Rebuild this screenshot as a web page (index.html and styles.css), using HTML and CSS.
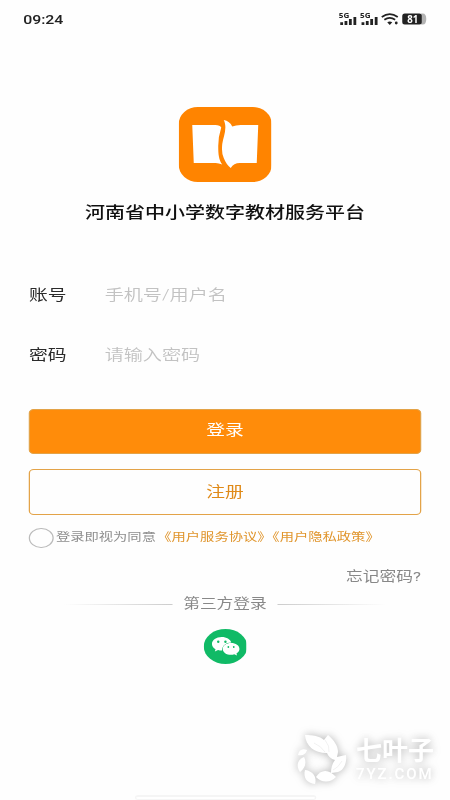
FILE: index.html
```html
<!DOCTYPE html>
<html lang="zh-CN">
<head>
<meta charset="utf-8">
<title>登录</title>
<link rel="stylesheet" href="styles.css">
</head>
<body>
<main class="screen">
  <header class="status">
    <span class="time">09:24</span>
    <svg class="indicators" width="72" height="20" viewBox="0 0 90 20" preserveAspectRatio="none">
      <g fill="#222">
        <g>
          <path d="M1.500 12.200h2.800v2.800H1.500zM5.800 11h2.800v4H5.800zM10.200 9H13v6h-2.800zM14.700 7h2.800v8h-2.800z"/>
          <text x="0" y="7.800" class="net" textLength="10.500" lengthAdjust="spacingAndGlyphs">5G</text>
        </g>
        <g transform="translate(21.300)">
          <path d="M1.500 12.200h2.800v2.800H1.500zM5.800 11h2.800v4H5.800zM10.200 9H13v6h-2.800zM14.700 7h2.800v8h-2.800z"/>
          <text x="0" y="7.800" class="net" textLength="10.500" lengthAdjust="spacingAndGlyphs">5G</text>
        </g>
        <path d="M48.500 12.200 51 15l2.500-2.800q-2.500-1.500-5 0z"/>
        <circle cx="57.500" cy="13" r="1.400"/>
      </g>
      <path d="M43 7q8-5.800 16 0M45.600 9.800q5.400-3.900 10.800 0" fill="none" stroke="#222" stroke-width="1.700"/>
      <path d="M82 3.500h2q3.500 0 3.500 5.500t-3.500 5.500h-2z" fill="#b3b3b3"/>
      <rect x="63.500" y="3.500" width="19.500" height="11" rx="2.500" fill="#222"/>
      <text x="68.500" y="12.500" class="level" textLength="11" lengthAdjust="spacingAndGlyphs">81</text>
    </svg>
  </header>

  <section class="brand">
    <svg class="logo" width="74.400" height="75" viewBox="0 0 93 75" preserveAspectRatio="none">
      <rect width="93" height="75" rx="19" ry="17" fill="#ff8400"/>
      <path d="M13.500 18h23q5 0 6 2.500-3 9-3 18.500c0 8 .5 14 4 18.500Q40 56 37 56H15z" fill="#fff"/>
      <path d="M45 13q6 1 8.500 6.500Q57 18 62 18h17.500L78 56H61q-6 0-9 5-4.500-3.500-7-10-2.500-5-1.500-14c1-7 5.500-16 1.500-24z" fill="#fff"/>
    </svg>
    <h1>河南省中小学数字教材服务平台</h1>
  </section>

  <form class="form">
    <div class="field"><span class="label">账号</span><span class="hint">手机号/用户名</span></div>
    <div class="field"><span class="label">密码</span><span class="hint">请输入密码</span></div>
    <button type="button" class="btn primary">登录</button>
    <button type="button" class="btn outline">注册</button>
    <div class="agree"><i class="radio"></i><span>登录即视为同意</span><span class="policy first">《用户服务协议》</span><span class="policy last">《用户隐私政策》</span></div>
    <div class="forgot">忘记密码?</div>
  </form>

  <div class="third"><i class="rule left"></i><span>第三方登录</span><i class="rule right"></i></div>
  <svg class="wechat" width="34.800" height="35" viewBox="0 0 43.500 35" preserveAspectRatio="none">
    <ellipse cx="21.750" cy="17.500" rx="21.750" ry="17.500" fill="#10ba66"/>
    <path d="M18 8c-5.500 0-9.800 3-9.800 6.900 0 2.200 1.400 4.100 3.600 5.400l-.7 2.300 3.200-1.500c1.200.4 2.500.5 4 .5 0-5 4-8 9.300-8C26.700 10.300 22.700 8 18 8z" fill="#fff"/>
    <path d="M27.300 14c-4.700 0-8.300 2.500-8.300 5.900s3.600 5.900 8.300 5.900q1.700 0 3.200-.5l2.800 1.200-.6-2.100c1.900-1.100 3-2.700 3-4.500 0-3.400-3.700-5.900-8.400-5.900z" fill="#fff"/>
    <g fill="#10ba66"><circle cx="14.500" cy="12.700" r="1.200"/><circle cx="21.700" cy="12.700" r="1.200"/><circle cx="24.600" cy="18" r=".9"/><circle cx="30" cy="18" r=".9"/></g>
  </svg>
  <i class="homebar"></i>
</main>

<aside class="watermark">
  <svg width="50" height="50" viewBox="0 0 50 50">
    <g fill="#fff">
      <path d="M8 1c7 0 15 1 19 5l4-5c6 5 10 11 10 17l-1 5 9-2c1 8-2 15-8 17l-7 1c0-5 1-9 4-13-4-1-7-4-8-7C17 19 9 12 8 1z"/>
      <path d="M19 43c5-8 13-8 20 0-6 6-14 6-20 0z"/>
      <path d="M8 36c8 1 12 7 10 14C10 49 6 44 8 36z"/>
      <path d="M7 23c3 6 1 11-4 15-4-6-3-12 4-15z"/>
      <path d="M1 21c1-5 4-7 9-5-1 4-4 6-9 5z"/>
    </g>
    <path d="M17 9q7 3 11 9M28 6q5 6 4 12M45 27q-4 7-9 9" fill="none" stroke="#ededed" stroke-width=".8"/>
  </svg>
  <div class="site"><b>七叶子</b><span>7YZ.COM</span></div>
</aside>
</body>
</html>
```

FILE: styles.css
```css
* { box-sizing: border-box; }
body {
  position: relative;
  margin: 0;
  width: 450px;
  height: 800px;
  overflow: hidden;
  background: #fefefe;
  font-family: Roboto, "Noto Sans CJK SC", sans-serif;
}
/* A 360px wide layout stretched to the full window width. */
.screen {
  display: flex;
  flex-direction: column;
  align-items: center;
  width: 360px;
  height: 800px;
  transform: scaleX(1.25);
  transform-origin: 0 0;
}
.status {
  display: flex;
  justify-content: space-between;
  width: 100%;
  height: 39px;
  padding: 8px 17.500px 0 18.500px;
}
.time { font-size: 12.700px; line-height: 23px; font-weight: 500; color: #222; }
.indicators { margin-top: 2px; }
.net { font: bold 7.500px "Noto Sans", sans-serif; }
.level { font: bold 10px "Noto Sans", sans-serif; fill: #fff; }
.brand { display: flex; flex-direction: column; align-items: center; height: 226px; padding-top: 68px; }
.logo { flex: none; }
h1 { margin: 19px 0 0; font-size: 16px; line-height: 24px; font-weight: 500; color: #111; white-space: nowrap; }
.form { width: 313.600px; }
.field { display: flex; height: 60px; align-items: center; font-size: 15px; line-height: 22px; }
.label { width: 60.500px; color: #2b2b2b; }
.hint { color: #c2c2c2; font-size: 15.300px; font-weight: 350; }
.btn {
  display: block;
  width: 100%;
  height: 46px;
  padding: 0 0 3px;
  border: 1px solid #e3a348;
  border-radius: 4px;
  font: 15px/22px Roboto, "Noto Sans CJK SC", sans-serif;
}
.primary { height: 45px; margin-top: 24px; color: #fff; background: #ff8c0a; }
.outline { margin-top: 15px; padding-bottom: 1px; color: #e08a18; background: #fefefe; }
.agree { display: flex; align-items: center; height: 24px; margin-top: 11px; font-size: 11.440px; line-height: 20px; color: #8e8e8e; white-space: nowrap; }
.radio { flex: none; width: 19.500px; height: 20px; margin-right: 2px; border: 1px solid #bbb; border-radius: 50%; }
.agree span { position: relative; top: -1px; }
.policy { color: #e0952c; }
.agree .first { margin-left: 1px; }
.agree .last { margin-left: -5px; }
.forgot { margin-top: 17px; text-align: right; font-size: 13.400px; line-height: 20px; color: #888; }
.third { display: flex; align-items: center; height: 22px; margin-top: 6px; font-size: 13.400px; line-height: 20px; color: #888; gap: 9px; }
.rule { width: 87px; height: 1px; }
.left { background: linear-gradient(90deg, #fefefe, #ccc); }
.right { background: linear-gradient(90deg, #ccc, #fefefe); }
.wechat { flex: none; margin-top: 14px; }
.homebar { width: 145px; height: 5px; margin-top: auto; border: 1px solid #f5f5f5; border-top-width: 2px; border-radius: 3px; background: #fff; }
.watermark {
  position: absolute;
  left: 297px;
  top: 734px;
  display: flex;
  gap: 9px;
  color: #fff;
  filter: drop-shadow(0 0 4px rgba(0, 0, 0, .17)) drop-shadow(0 0 5px rgba(0, 0, 0, .14));
}
.site { display: flex; flex-direction: column; padding-top: 3px; }
.site b { font-size: 26px; line-height: 28px; font-weight: 700; }
.site span { margin-top: 1px; font-size: 15px; line-height: 16px; letter-spacing: 1.900px; font-weight: 500; }
```
